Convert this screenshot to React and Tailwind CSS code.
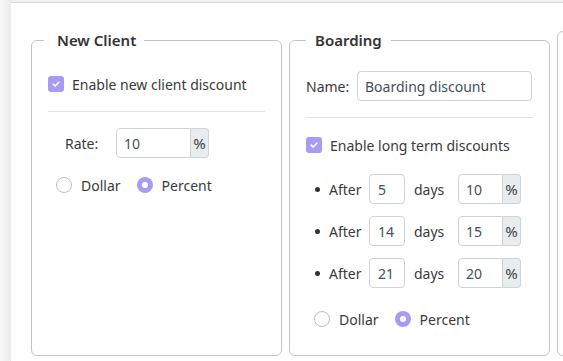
import React from 'react';

const font = { fontFamily: '"Noto Sans", "Open Sans", sans-serif' };

const Check = () => (
    <span className="w-[16px] h-[16px] rounded-[3px] bg-[#a99bf3] flex items-center justify-center shrink-0">
        <svg width="10" height="10" viewBox="0 0 10 10" fill="none">
            <path d="M2.2 5.2 L4.2 7 L7.8 3.2" stroke="#fff" strokeWidth="1.6" strokeLinecap="round" strokeLinejoin="round" />
        </svg>
    </span>
);

const Radio = ({ checked }) =>
    checked ? (
        <span className="w-[16px] h-[16px] rounded-full bg-[#a99bf3] flex items-center justify-center shrink-0">
            <span className="w-[6px] h-[6px] rounded-full bg-white"></span>
        </span>
    ) : (
        <span className="w-[16px] h-[16px] rounded-full border border-[#bdbdbd] bg-white shrink-0"></span>
    );

const Input = ({ value, width, pl = 'pl-[7px]' }) => (
    <div className={`h-[30px] ${width} ${pl} border border-[#ced4da] rounded-[4px] flex items-center text-[#44505c] bg-white`}>
        {value}
    </div>
);

const PercentInput = ({ value, width }) => (
    <div className="flex h-[30px]">
        <div className={`${width} pl-[7px] border border-[#ced4da] rounded-l-[4px] flex items-center text-[#44505c] bg-white`}>
            {value}
        </div>
        <div className="w-[18px] border border-l-0 border-[#ced4da] rounded-r-[4px] bg-[#e9ecef] flex items-center justify-center text-[15px] text-[#444]">
            %
        </div>
    </div>
);

const RadioRow = () => (
    <div className="flex items-center h-[20px]">
        <Radio />
        <span className="ml-[9px]">Dollar</span>
        <span className="ml-[16px]"><Radio checked /></span>
        <span className="ml-[9px]">Percent</span>
    </div>
);

const AfterRow = ({ days, pct }) => (
    <div className="flex items-center h-[30px] mt-[12px] first:mt-0">
        <span className="w-[5px] h-[5px] rounded-full bg-[#333] ml-[9px]"></span>
        <span className="ml-[9px] w-[40px]">After</span>
        <Input value={days} width="w-[36px]" pl="pl-[8px]" />
        <span className="ml-[9px] w-[44px]">days</span>
        <PercentInput value={pct} width="w-[45px]" />
    </div>
);

export default function App() {
    return (
        <div className="w-[563px] h-[361px] overflow-hidden flex bg-[#f1f1f1] text-[14px] text-[#3a3a3a]" style={font}>
            <div className="w-[11px] shrink-0 bg-gradient-to-r from-[#f7f7f7] to-[#ebebeb]"></div>
            <div className="flex-1 mt-[2px] border-t border-[#dadada] bg-white flex gap-[7px] pl-[20px] pt-[28px]">
                <fieldset className="w-[251px] h-[325px] shrink-0 border border-[#c4c4c4] rounded-[6px]">
                    <legend className="ml-[12px] pl-[13px] pr-[8px] text-[15px] leading-[18px] font-semibold text-[#333]">New Client</legend>
                    <div className="px-[16px]">
                        <div className="flex items-center h-[30px] mt-[20px]">
                            <Check />
                            <span className="ml-[8px]">Enable new client discount</span>
                        </div>
                        <div className="h-px bg-[#e3e3e3] mt-[12px]"></div>
                        <div className="flex items-center h-[30px] mt-[16px]">
                            <span className="ml-[17px] w-[51px]">Rate:</span>
                            <PercentInput value="10" width="w-[75px]" />
                        </div>
                        <div className="mt-[17px] ml-[8px]">
                            <RadioRow />
                        </div>
                    </div>
                </fieldset>
                <fieldset className="w-[261px] h-[325px] shrink-0 border border-[#c4c4c4] rounded-[6px]">
                    <legend className="ml-[16px] pl-[9px] pr-[9px] text-[15px] leading-[18px] font-semibold text-[#333]">Boarding</legend>
                    <div className="px-[16px]">
                        <div className="flex items-center h-[30px] mt-[22px]">
                            <span className="w-[51px]">Name:</span>
                            <Input value="Boarding discount" width="w-[175px]" />
                        </div>
                        <div className="h-px bg-[#e3e3e3] mt-[16px]"></div>
                        <div className="flex items-center h-[30px] mt-[12px]">
                            <Check />
                            <span className="ml-[8px]">Enable long term discounts</span>
                        </div>
                        <div className="mt-[14px]">
                            <AfterRow days="5" pct="10" />
                            <AfterRow days="14" pct="15" />
                            <AfterRow days="21" pct="20" />
                        </div>
                        <div className="mt-[21px] ml-[8px]">
                            <RadioRow />
                        </div>
                    </div>
                </fieldset>
                <fieldset className="w-[200px] h-[325px] shrink-0 border border-[#c4c4c4] rounded-[6px]"></fieldset>
            </div>
        </div>
    );
}
